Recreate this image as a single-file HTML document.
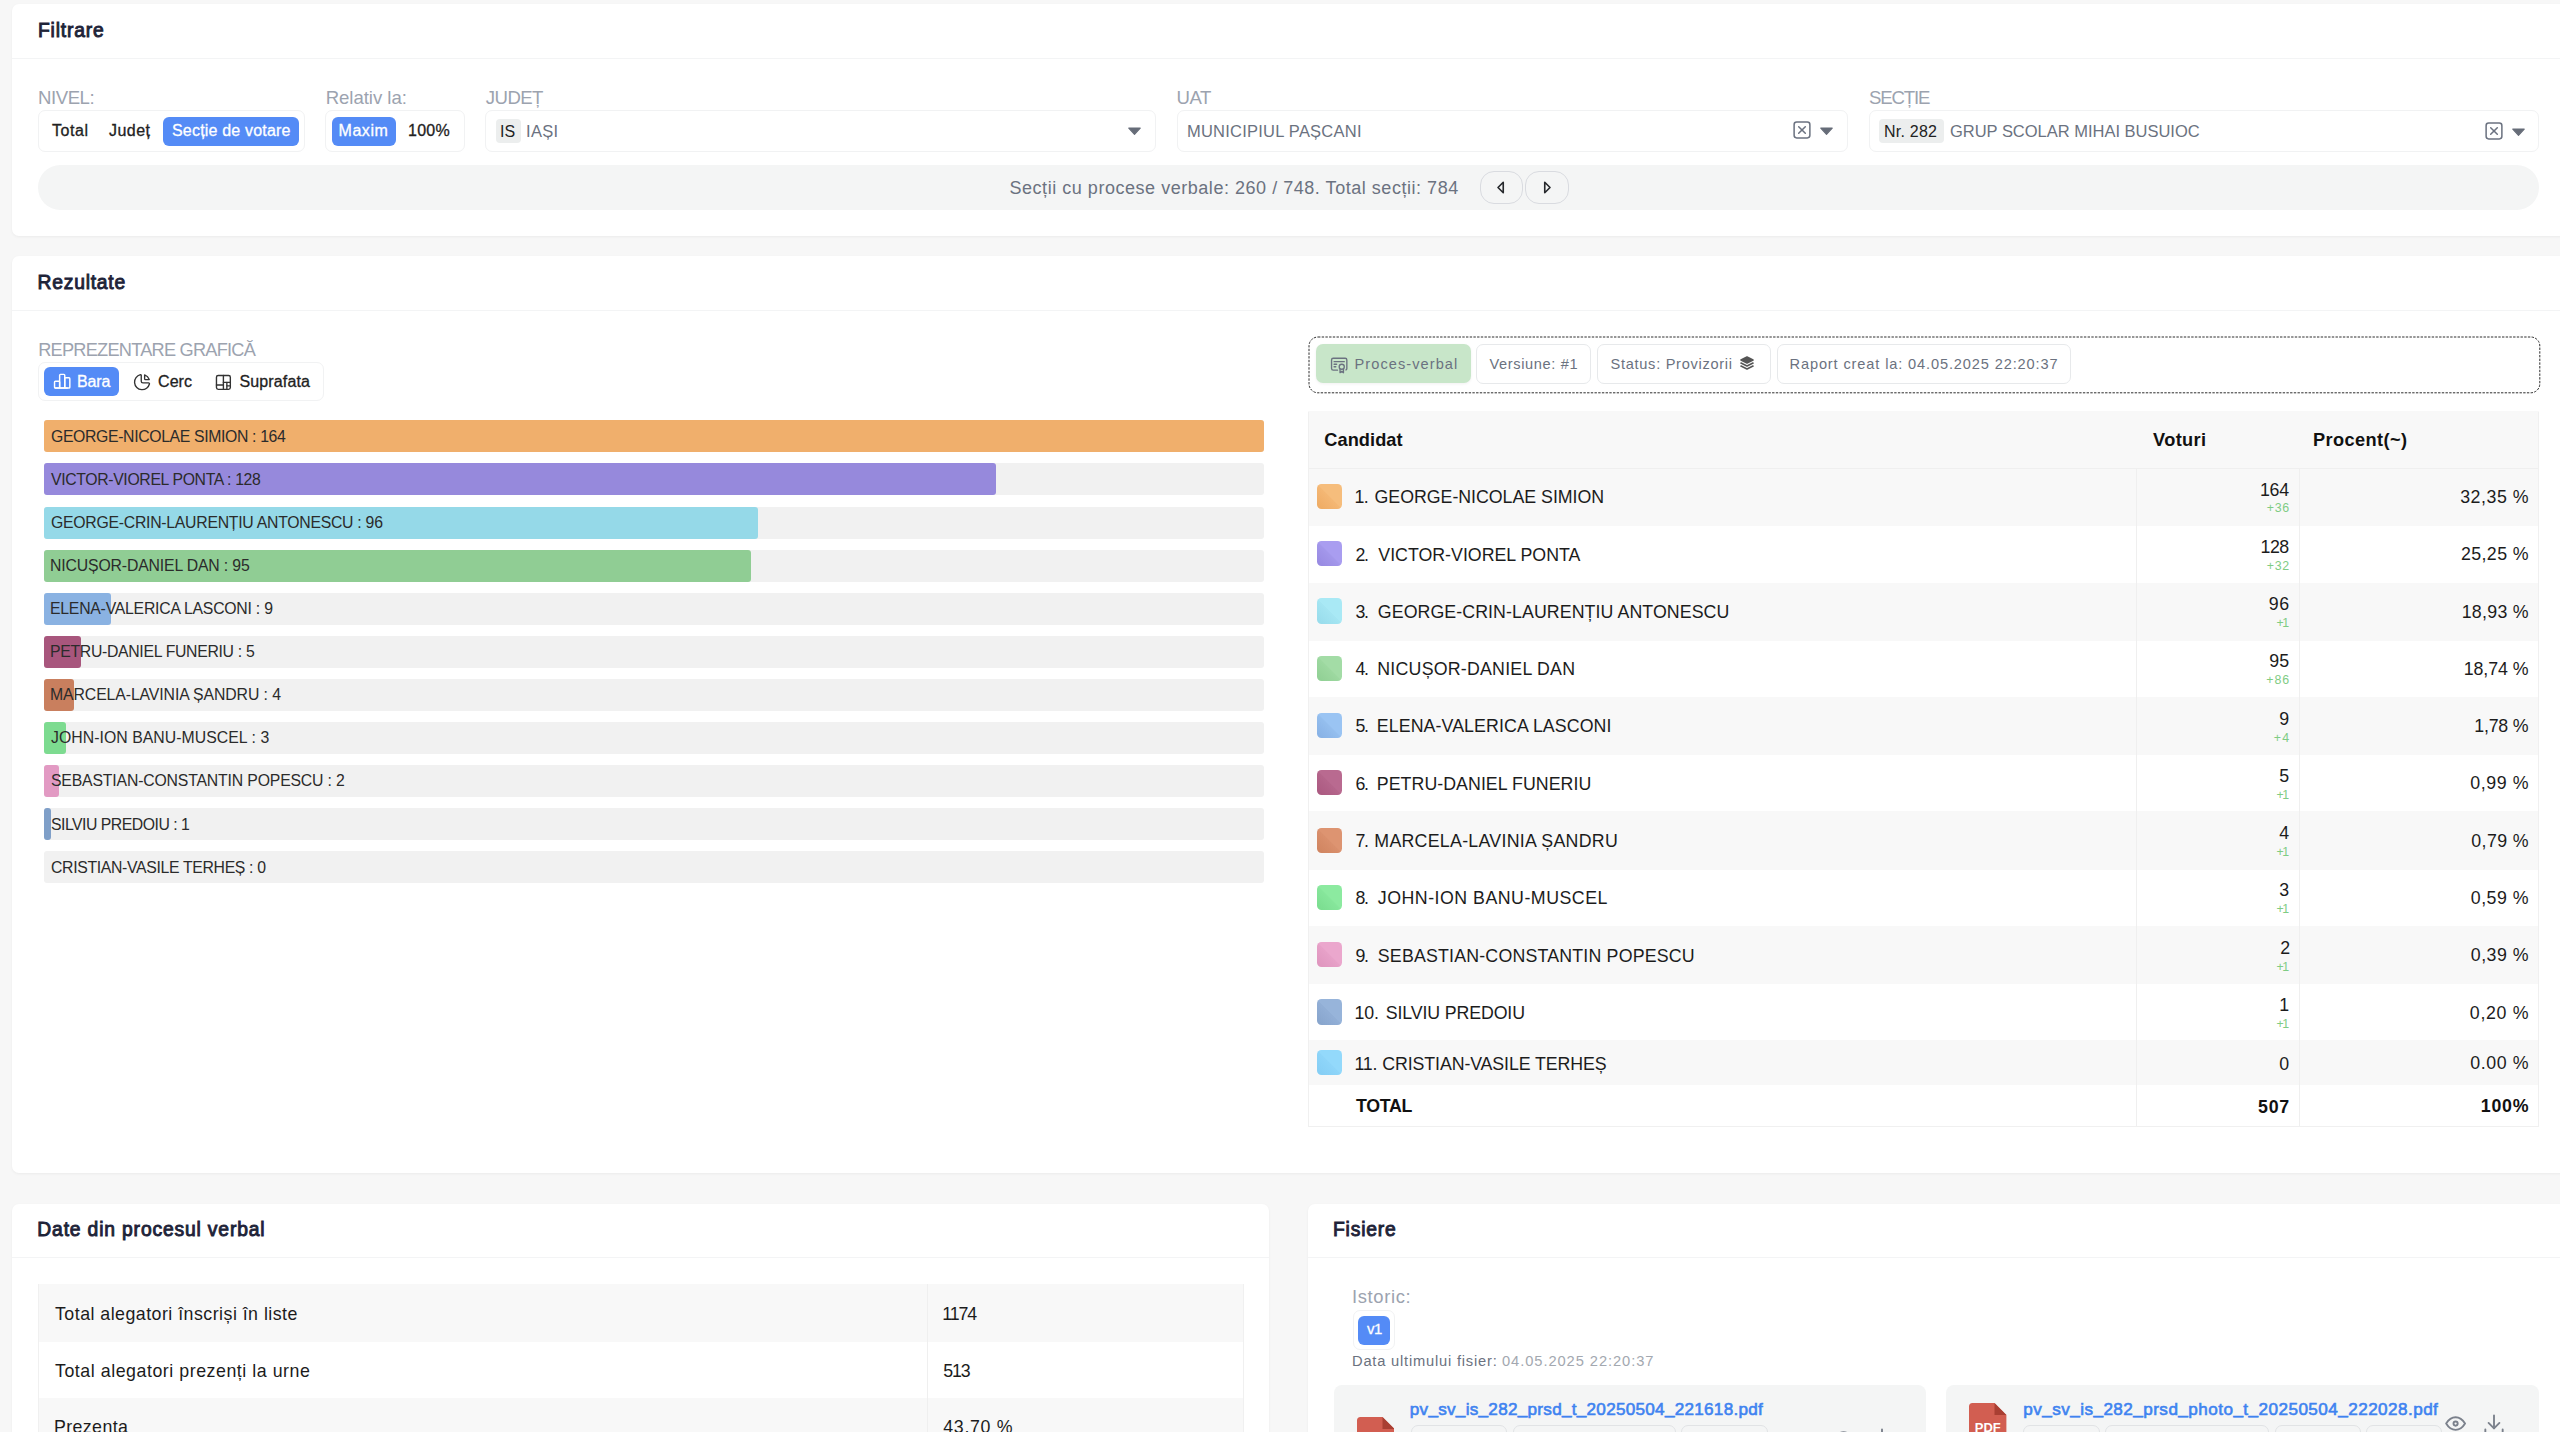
<!DOCTYPE html>
<html lang="ro"><head><meta charset="utf-8"><title>Rezultate</title>
<style>
html,body{margin:0;padding:0;}
body{width:2560px;height:1432px;overflow:hidden;background:#f7f7f7;position:relative;
font-family:"Liberation Sans",sans-serif;}
body>div,body>span,body>svg{position:absolute;box-sizing:border-box;}
.t{white-space:nowrap;line-height:1;}
</style></head>
<body>
<div style="left:12px;top:4px;width:2600px;height:232px;background:#fff;border-radius:7px;box-shadow:0 1px 3px rgba(0,0,0,.05);"></div>
<div style="left:12px;top:58px;width:2600px;height:1px;background:#f3f4f5;"></div>
<div style="left:12px;top:256px;width:2600px;height:917px;background:#fff;border-radius:7px;box-shadow:0 1px 3px rgba(0,0,0,.05);"></div>
<div style="left:12px;top:310px;width:2600px;height:1px;background:#f3f4f5;"></div>
<div style="left:12px;top:1204px;width:1257px;height:300px;background:#fff;border-radius:7px;box-shadow:0 1px 3px rgba(0,0,0,.05);"></div>
<div style="left:12px;top:1257px;width:1257px;height:1px;background:#f3f4f5;"></div>
<div style="left:1308px;top:1204px;width:1300px;height:300px;background:#fff;border-radius:7px;box-shadow:0 1px 3px rgba(0,0,0,.05);"></div>
<div style="left:1308px;top:1257px;width:1300px;height:1px;background:#f3f4f5;"></div>
<span id="t1" class="t" style="top:21.00px;font-size:19.3px;color:#1e2338;-webkit-text-stroke:0.9px currentColor;letter-spacing:0.819px;left:38.00px;">Filtrare</span>
<span id="t2" class="t" style="top:273.00px;font-size:19.3px;color:#1e2338;-webkit-text-stroke:0.9px currentColor;letter-spacing:0.783px;left:37.50px;">Rezultate</span>
<span id="t3" class="t" style="top:1220.00px;font-size:19.3px;color:#1e2338;-webkit-text-stroke:0.9px currentColor;letter-spacing:0.842px;left:37.30px;">Date din procesul verbal</span>
<span id="t4" class="t" style="top:1220.00px;font-size:19.3px;color:#1e2338;-webkit-text-stroke:0.9px currentColor;letter-spacing:0.812px;left:1333.00px;">Fisiere</span>
<span id="t5" class="t" style="top:89.00px;font-size:18.6px;color:#9ca3af;letter-spacing:-0.468px;left:38.10px;">NIVEL:</span>
<span id="t6" class="t" style="top:89.00px;font-size:18.6px;color:#9ca3af;letter-spacing:-0.047px;left:325.70px;">Relativ la:</span>
<span id="t7" class="t" style="top:89.00px;font-size:18.6px;color:#9ca3af;letter-spacing:-0.564px;left:485.80px;">JUDEȚ</span>
<span id="t8" class="t" style="top:89.00px;font-size:18.6px;color:#9ca3af;letter-spacing:-0.475px;left:1176.60px;">UAT</span>
<span id="t9" class="t" style="top:89.00px;font-size:18.6px;color:#9ca3af;letter-spacing:-1.151px;left:1869.00px;">SECȚIE</span>
<div style="left:37.5px;top:110px;width:267.5px;height:41.5px;background:#fff;border:1px solid #f1f2f3;border-radius:7px;"></div>
<span id="t10" class="t" style="top:123.00px;font-size:16px;color:#222;-webkit-text-stroke:.3px currentColor;letter-spacing:0.564px;left:52.00px;">Total</span>
<span id="t11" class="t" style="top:123.00px;font-size:16px;color:#222;-webkit-text-stroke:.3px currentColor;letter-spacing:0.451px;left:109.00px;">Județ</span>
<div style="left:163px;top:117px;width:136px;height:29px;background:#548bf6;border-radius:6px;"></div>
<span id="t12" class="t" style="top:123.00px;font-size:16px;color:#fff;-webkit-text-stroke:.3px currentColor;letter-spacing:0.185px;left:172.00px;">Secție de votare</span>
<div style="left:325px;top:110px;width:139.5px;height:41.5px;background:#fff;border:1px solid #f1f2f3;border-radius:7px;"></div>
<div style="left:332px;top:117px;width:64px;height:29px;background:#548bf6;border-radius:6px;"></div>
<span id="t13" class="t" style="top:123.00px;font-size:16px;color:#fff;-webkit-text-stroke:.3px currentColor;letter-spacing:0.555px;left:338.50px;">Maxim</span>
<span id="t14" class="t" style="top:123.00px;font-size:16px;color:#222;-webkit-text-stroke:.3px currentColor;letter-spacing:0.268px;left:408.00px;">100%</span>
<div style="left:485px;top:110px;width:671px;height:41.5px;background:#fff;border:1px solid #f1f2f3;border-radius:7px;"></div>
<div style="left:496px;top:119px;width:25px;height:23.5px;background:#eceeee;border-radius:4px;"></div>
<span id="t15" class="t" style="top:124.00px;font-size:16px;color:#222;letter-spacing:0.055px;left:500.00px;">IS</span>
<span id="t16" class="t" style="top:123.00px;font-size:16.5px;color:#6b7280;letter-spacing:0.302px;left:526.00px;">IAȘI</span>
<svg style="left:1123px;top:119.3px;" width="23" height="23" viewBox="0 0 24 24" fill="#666c78" stroke="none" stroke-width="2" stroke-linecap="round" stroke-linejoin="round"><path d="M6 9.500l6 6.500l6 -6.500z" stroke="#666c78" stroke-width="1.200"/></svg>
<div style="left:1176.5px;top:110px;width:671px;height:41.5px;background:#fff;border:1px solid #f1f2f3;border-radius:7px;"></div>
<span id="t17" class="t" style="top:123.00px;font-size:16.5px;color:#6b7280;letter-spacing:0.232px;left:1187.00px;">MUNICIPIUL PAȘCANI</span>
<svg style="left:1791px;top:119.2px;" width="22" height="22" viewBox="0 0 24 24" fill="none" stroke="#6b7280" stroke-width="1.65" stroke-linecap="round" stroke-linejoin="round"><rect x="3.400" y="3.400" width="17.200" height="17.200" rx="2.800"/><path d="M8.400 8.400l7.200 7.200"/><path d="M15.600 8.400l-7.200 7.200"/></svg>
<svg style="left:1815.25px;top:119.3px;" width="23" height="23" viewBox="0 0 24 24" fill="#666c78" stroke="none" stroke-width="2" stroke-linecap="round" stroke-linejoin="round"><path d="M6 9.500l6 6.500l6 -6.500z" stroke="#666c78" stroke-width="1.200"/></svg>
<div style="left:1868.5px;top:110px;width:670.5px;height:41.5px;background:#fff;border:1px solid #f1f2f3;border-radius:7px;"></div>
<div style="left:1879px;top:119px;width:64.5px;height:24px;background:#eceeee;border-radius:4px;"></div>
<span id="t18" class="t" style="top:124.00px;font-size:16px;color:#222;letter-spacing:0.219px;left:1884.00px;">Nr. 282</span>
<span id="t19" class="t" style="top:123.00px;font-size:16.5px;color:#6b7280;letter-spacing:-0.015px;left:1950.00px;">GRUP SCOLAR MIHAI BUSUIOC</span>
<svg style="left:2482.5px;top:119.7px;" width="22" height="22" viewBox="0 0 24 24" fill="none" stroke="#6b7280" stroke-width="1.65" stroke-linecap="round" stroke-linejoin="round"><rect x="3.400" y="3.400" width="17.200" height="17.200" rx="2.800"/><path d="M8.400 8.400l7.200 7.200"/><path d="M15.600 8.400l-7.200 7.200"/></svg>
<svg style="left:2506.5px;top:119.8px;" width="23" height="23" viewBox="0 0 24 24" fill="#666c78" stroke="none" stroke-width="2" stroke-linecap="round" stroke-linejoin="round"><path d="M6 9.500l6 6.500l6 -6.500z" stroke="#666c78" stroke-width="1.200"/></svg>
<div style="left:37.5px;top:165px;width:2501.5px;height:44.5px;background:#f4f5f5;border-radius:22.25px;"></div>
<span id="t20" class="t" style="top:179.00px;font-size:18px;color:#6b7280;letter-spacing:0.533px;left:1009.50px;">Secții cu procese verbale: 260 / 748. Total secții: 784</span>
<div style="left:1480px;top:171px;width:42.7px;height:32.5px;border:1px solid #d9dbe0;border-radius:14px;"></div>
<div style="left:1525px;top:171px;width:43.8px;height:32.5px;border:1px solid #d9dbe0;border-radius:14px;"></div>
<svg style="left:1491.2px;top:177px;" width="21" height="21" viewBox="0 0 24 24" fill="none" stroke="#26282c" stroke-width="1.85" stroke-linecap="round" stroke-linejoin="round"><path d="M14 6l-6 6l6 6v-12"/></svg>
<svg style="left:1535.9px;top:177px;" width="21" height="21" viewBox="0 0 24 24" fill="none" stroke="#26282c" stroke-width="1.85" stroke-linecap="round" stroke-linejoin="round"><path d="M10 18l6 -6l-6 -6v12"/></svg>
<span id="t21" class="t" style="top:341.00px;font-size:18.2px;color:#9ca3af;letter-spacing:-0.761px;left:38.20px;">REPREZENTARE GRAFICĂ</span>
<div style="left:38px;top:362.3px;width:286px;height:39px;background:#fff;border:1px solid #f1f2f3;border-radius:7px;"></div>
<div style="left:44px;top:367.4px;width:74.5px;height:29px;background:#548bf6;border-radius:6px;"></div>
<svg style="left:51.8px;top:371.4px;" width="20.4" height="20.4" viewBox="0 0 24 24" fill="none" stroke="#fff" stroke-width="1.7" stroke-linecap="round" stroke-linejoin="round"><path d="M3 13a1 1 0 0 1 1 -1h4a1 1 0 0 1 1 1v6a1 1 0 0 1 -1 1h-4a1 1 0 0 1 -1 -1z"/><path d="M15 9a1 1 0 0 1 1 -1h4a1 1 0 0 1 1 1v10a1 1 0 0 1 -1 1h-4a1 1 0 0 1 -1 -1z"/><path d="M9 5a1 1 0 0 1 1 -1h4a1 1 0 0 1 1 1v14a1 1 0 0 1 -1 1h-4a1 1 0 0 1 -1 -1z"/><path d="M4 20h14"/></svg>
<span id="t22" class="t" style="top:374.00px;font-size:16px;color:#fff;-webkit-text-stroke:.3px currentColor;letter-spacing:-0.133px;left:77.00px;">Bara</span>
<svg style="left:132px;top:371.7px;" width="20.2" height="20.2" viewBox="0 0 24 24" fill="none" stroke="#333" stroke-width="1.6" stroke-linecap="round" stroke-linejoin="round"><path d="M10 3.2a9 9 0 1 0 10.8 10.8a1 1 0 0 0 -1 -1h-6.8a2 2 0 0 1 -2 -2v-7a.9 .9 0 0 0 -1 -.8"/><path d="M15 3.5a9 9 0 0 1 5.500 5.500h-4.500a1 1 0 0 1 -1 -1v-4.500"/></svg>
<span id="t23" class="t" style="top:374.00px;font-size:16px;color:#222;-webkit-text-stroke:.3px currentColor;letter-spacing:0.073px;left:158.00px;">Cerc</span>
<svg style="left:213.1px;top:371.6px;" width="20.8" height="20.8" viewBox="0 0 24 24" fill="none" stroke="#333" stroke-width="1.6" stroke-linecap="round" stroke-linejoin="round"><path d="M4 6a2 2 0 0 1 2 -2h12a2 2 0 0 1 2 2v12a2 2 0 0 1 -2 2h-12a2 2 0 0 1 -2 -2z"/><path d="M12 4v16"/><path d="M4 15h8"/><path d="M12 12h8"/><path d="M16 12v8"/><path d="M16 16h4"/></svg>
<span id="t24" class="t" style="top:374.00px;font-size:16px;color:#222;-webkit-text-stroke:.3px currentColor;letter-spacing:0.127px;left:239.50px;">Suprafata</span>
<div style="left:44px;top:420.3px;width:1220px;height:32px;background:#f1f1f1;border-radius:3px;"></div>
<div style="left:44px;top:420.3px;width:1220.0px;height:32px;background:#f0af6c;border-radius:3px;"></div>
<span id="t25" class="t" style="top:429.00px;font-size:15.8px;color:#2b2b2b;letter-spacing:-0.356px;left:51.00px;">GEORGE-NICOLAE SIMION : 164</span>
<div style="left:44px;top:463.4px;width:1220px;height:32px;background:#f1f1f1;border-radius:3px;"></div>
<div style="left:44px;top:463.4px;width:952.2px;height:32px;background:#9689dc;border-radius:3px;"></div>
<span id="t26" class="t" style="top:472.00px;font-size:15.8px;color:#2b2b2b;letter-spacing:-0.353px;left:51.00px;">VICTOR-VIOREL PONTA : 128</span>
<div style="left:44px;top:506.5px;width:1220px;height:32px;background:#f1f1f1;border-radius:3px;"></div>
<div style="left:44px;top:506.5px;width:714.1px;height:32px;background:#95d9e8;border-radius:3px;"></div>
<span id="t27" class="t" style="top:515.00px;font-size:15.8px;color:#2b2b2b;letter-spacing:-0.264px;left:51.00px;">GEORGE-CRIN-LAURENȚIU ANTONESCU : 96</span>
<div style="left:44px;top:549.6px;width:1220px;height:32px;background:#f1f1f1;border-radius:3px;"></div>
<div style="left:44px;top:549.6px;width:706.7px;height:32px;background:#90cd94;border-radius:3px;"></div>
<span id="t28" class="t" style="top:558.00px;font-size:15.8px;color:#2b2b2b;letter-spacing:-0.153px;left:50.00px;">NICUȘOR-DANIEL DAN : 95</span>
<div style="left:44px;top:592.7px;width:1220px;height:32px;background:#f1f1f1;border-radius:3px;"></div>
<div style="left:44px;top:592.7px;width:67.0px;height:32px;background:#8ab2e2;border-radius:3px;"></div>
<span id="t29" class="t" style="top:601.00px;font-size:15.8px;color:#2b2b2b;letter-spacing:-0.237px;left:50.00px;">ELENA-VALERICA LASCONI : 9</span>
<div style="left:44px;top:635.8px;width:1220px;height:32px;background:#f1f1f1;border-radius:3px;"></div>
<div style="left:44px;top:635.8px;width:37.2px;height:32px;background:#a8567d;border-radius:3px;"></div>
<span id="t30" class="t" style="top:644.00px;font-size:15.8px;color:#2b2b2b;letter-spacing:-0.310px;left:50.00px;">PETRU-DANIEL FUNERIU : 5</span>
<div style="left:44px;top:678.9px;width:1220px;height:32px;background:#f1f1f1;border-radius:3px;"></div>
<div style="left:44px;top:678.9px;width:29.8px;height:32px;background:#c97f5e;border-radius:3px;"></div>
<span id="t31" class="t" style="top:687.00px;font-size:15.8px;color:#2b2b2b;letter-spacing:-0.092px;left:50.00px;">MARCELA-LAVINIA ȘANDRU : 4</span>
<div style="left:44px;top:722.0px;width:1220px;height:32px;background:#f1f1f1;border-radius:3px;"></div>
<div style="left:44px;top:722.0px;width:22.3px;height:32px;background:#7ddb90;border-radius:3px;"></div>
<span id="t32" class="t" style="top:730.00px;font-size:15.8px;color:#2b2b2b;letter-spacing:0.049px;left:51.00px;">JOHN-ION BANU-MUSCEL : 3</span>
<div style="left:44px;top:765.1px;width:1220px;height:32px;background:#f1f1f1;border-radius:3px;"></div>
<div style="left:44px;top:765.1px;width:14.9px;height:32px;background:#e29ac3;border-radius:3px;"></div>
<span id="t33" class="t" style="top:773.00px;font-size:15.8px;color:#2b2b2b;letter-spacing:-0.169px;left:51.00px;">SEBASTIAN-CONSTANTIN POPESCU : 2</span>
<div style="left:44px;top:808.2px;width:1220px;height:32px;background:#f1f1f1;border-radius:3px;"></div>
<div style="left:44px;top:808.2px;width:7.4px;height:32px;background:#7f9fc8;border-radius:3px;"></div>
<span id="t34" class="t" style="top:817.00px;font-size:15.8px;color:#2b2b2b;letter-spacing:-0.494px;left:51.00px;">SILVIU PREDOIU : 1</span>
<div style="left:44px;top:851.3px;width:1220px;height:32px;background:#f1f1f1;border-radius:3px;"></div>
<span id="t35" class="t" style="top:860.00px;font-size:15.8px;color:#2b2b2b;letter-spacing:-0.330px;left:51.00px;">CRISTIAN-VASILE TERHEȘ : 0</span>
<svg style="left:1307.5px;top:335.7px;" width="1233" height="58" viewBox="0 0 1233 58" fill="none"><rect x="1" y="1" width="1230.800" height="55.800" rx="9" stroke="#2e2e2e" stroke-width="1" stroke-dasharray="2.400 1.300"/></svg>
<div style="left:1316.2px;top:344.2px;width:154.5px;height:39.2px;background:#c8e6c9;border-radius:7px;box-shadow:0 1px 3px rgba(0,0,0,.06);"></div>
<svg style="left:1329.1px;top:353.5px;" width="20.4" height="20.4" viewBox="0 0 24 24" fill="none" stroke="#6b7280" stroke-width="1.6" stroke-linecap="round" stroke-linejoin="round"><path d="M12 15a3 3 0 1 0 6 0a3 3 0 1 0 -6 0"/><path d="M13 17.5v4.5l2 -1.5l2 1.5v-4.5"/><path d="M10 19h-5a2 2 0 0 1 -2 -2v-10c0 -1.100 .9 -2 2 -2h14a2 2 0 0 1 2 2v10a2 2 0 0 1 -1 1.730"/><path d="M6 9h12"/><path d="M6 12h3"/><path d="M6 15h2"/></svg>
<span id="t36" class="t" style="top:357.00px;font-size:14.6px;color:#6b7280;letter-spacing:1.060px;left:1354.50px;">Proces-verbal</span>
<div style="left:1475.7px;top:344px;width:115px;height:39.5px;background:#fff;border:1px solid #e7e9eb;border-radius:7px;"></div>
<span id="t37" class="t" style="top:357.00px;font-size:14.6px;color:#6b7280;letter-spacing:0.635px;left:1489.50px;">Versiune: #1</span>
<div style="left:1596.5px;top:344px;width:174.3px;height:39.5px;background:#fff;border:1px solid #e7e9eb;border-radius:7px;"></div>
<span id="t38" class="t" style="top:357.00px;font-size:14.6px;color:#6b7280;letter-spacing:0.709px;left:1610.50px;">Status: Provizorii</span>
<svg style="left:1738px;top:353.8px;" width="18" height="18" viewBox="0 0 24 24" fill="none" stroke="#555" stroke-width="2.2" stroke-linecap="round" stroke-linejoin="round"><path d="M12 4l-8 4l8 4l8 -4z" fill="#555" stroke="#555"/><path d="M4 12l8 4l8 -4"/><path d="M4 16l8 4l8 -4"/></svg>
<div style="left:1776.7px;top:344px;width:294.7px;height:39.5px;background:#fff;border:1px solid #e7e9eb;border-radius:7px;"></div>
<span id="t39" class="t" style="top:357.00px;font-size:14.6px;color:#6b7280;letter-spacing:0.868px;left:1789.50px;">Raport creat la: 04.05.2025 22:20:37</span>
<div style="left:1308px;top:411.3px;width:1231.3000000000002px;height:56.9px;background:#f8f8f8;"></div>
<span id="t40" class="t" style="top:431.00px;font-size:18.2px;color:#111;font-weight:700;letter-spacing:0.065px;left:1324.30px;">Candidat</span>
<span id="t41" class="t" style="top:431.00px;font-size:18.2px;color:#111;font-weight:700;letter-spacing:0.373px;left:2153.00px;">Voturi</span>
<span id="t42" class="t" style="top:431.00px;font-size:18.2px;color:#111;font-weight:700;letter-spacing:0.401px;left:2313.00px;">Procent(~)</span>
<div style="left:1308px;top:468.2px;width:1231.3000000000002px;height:58.0px;background:#f8f8f8;"></div>
<div style="left:1317px;top:483.9px;width:25.2px;height:25.2px;border-radius:4.5px;background:linear-gradient(225deg,#f6bd7c 0%,#f6bd7c 49%,#f4b774 51%,#eeaa62 100%);"></div>
<span id="t43" class="t" style="top:489.00px;font-size:17.8px;color:#1c1c1c;letter-spacing:-0.589px;left:1354.50px;">1.</span>
<span id="t44" class="t" style="top:489.00px;font-size:17.8px;color:#1c1c1c;letter-spacing:-0.028px;left:1374.50px;">GEORGE-NICOLAE SIMION</span>
<span id="t45" class="t" style="top:482.00px;font-size:17.8px;color:#1c1c1c;letter-spacing:-0.189px;right:271.00px;">164</span>
<span id="t46" class="t" style="top:502.00px;font-size:12.4px;color:#7fcc84;letter-spacing:0.736px;right:270.07px;">+36</span>
<span id="t47" class="t" style="top:489.00px;font-size:17.8px;color:#1c1c1c;letter-spacing:0.527px;right:30.86px;">32,35 %</span>
<div style="left:1317px;top:541.18px;width:25.2px;height:25.2px;border-radius:4.5px;background:linear-gradient(225deg,#a99df0 0%,#a99df0 49%,#a397eb 51%,#9688e0 100%);"></div>
<span id="t48" class="t" style="top:547.00px;font-size:17.8px;color:#1c1c1c;letter-spacing:-1.500px;left:1355.50px;">2.</span>
<span id="t49" class="t" style="top:547.00px;font-size:17.8px;color:#1c1c1c;letter-spacing:-0.006px;left:1378.30px;">VICTOR-VIOREL PONTA</span>
<span id="t50" class="t" style="top:539.00px;font-size:17.8px;color:#1c1c1c;letter-spacing:-0.539px;right:271.35px;">128</span>
<span id="t51" class="t" style="top:560.00px;font-size:12.4px;color:#7fcc84;letter-spacing:0.736px;right:270.07px;">+32</span>
<span id="t52" class="t" style="top:546.00px;font-size:17.8px;color:#1c1c1c;letter-spacing:0.411px;right:30.98px;">25,25 %</span>
<div style="left:1308px;top:582.8px;width:1231.3000000000002px;height:58.0px;background:#f8f8f8;"></div>
<div style="left:1317px;top:598.46px;width:25.2px;height:25.2px;border-radius:4.5px;background:linear-gradient(225deg,#a9e9f5 0%,#a9e9f5 49%,#a4e5f2 51%,#97dbeb 100%);"></div>
<span id="t53" class="t" style="top:604.00px;font-size:17.8px;color:#1c1c1c;letter-spacing:-1.500px;left:1355.50px;">3.</span>
<span id="t54" class="t" style="top:604.00px;font-size:17.8px;color:#1c1c1c;letter-spacing:0.072px;left:1377.80px;">GEORGE-CRIN-LAURENȚIU ANTONESCU</span>
<span id="t55" class="t" style="top:596.00px;font-size:17.8px;color:#1c1c1c;letter-spacing:0.711px;right:270.10px;">96</span>
<span id="t56" class="t" style="top:617.00px;font-size:12.4px;color:#7fcc84;letter-spacing:-1.500px;right:272.31px;">+1</span>
<span id="t57" class="t" style="top:604.00px;font-size:17.8px;color:#1c1c1c;letter-spacing:0.277px;right:31.11px;">18,93 %</span>
<div style="left:1317px;top:655.74px;width:25.2px;height:25.2px;border-radius:4.5px;background:linear-gradient(225deg,#a3dca6 0%,#a3dca6 49%,#9dd8a0 51%,#8fcf93 100%);"></div>
<span id="t58" class="t" style="top:661.00px;font-size:17.8px;color:#1c1c1c;letter-spacing:-1.500px;left:1355.50px;">4.</span>
<span id="t59" class="t" style="top:661.00px;font-size:17.8px;color:#1c1c1c;letter-spacing:0.218px;left:1377.30px;">NICUȘOR-DANIEL DAN</span>
<span id="t60" class="t" style="top:653.00px;font-size:17.8px;color:#1c1c1c;letter-spacing:0.211px;right:270.60px;">95</span>
<span id="t61" class="t" style="top:674.00px;font-size:12.4px;color:#7fcc84;letter-spacing:0.986px;right:269.82px;">+86</span>
<span id="t62" class="t" style="top:661.00px;font-size:17.8px;color:#1c1c1c;letter-spacing:-0.056px;right:31.45px;">18,74 %</span>
<div style="left:1308px;top:696.7px;width:1231.3000000000002px;height:58.5px;background:#f8f8f8;"></div>
<div style="left:1317px;top:713.02px;width:25.2px;height:25.2px;border-radius:4.5px;background:linear-gradient(225deg,#9ac4f3 0%,#9ac4f3 49%,#94beee 51%,#86b0e4 100%);"></div>
<span id="t63" class="t" style="top:718.00px;font-size:17.8px;color:#1c1c1c;letter-spacing:-1.500px;left:1355.50px;">5.</span>
<span id="t64" class="t" style="top:718.00px;font-size:17.8px;color:#1c1c1c;letter-spacing:0.085px;left:1376.80px;">ELENA-VALERICA LASCONI</span>
<span id="t65" class="t" style="top:711.00px;font-size:17.8px;color:#1c1c1c;right:270.81px;">9</span>
<span id="t66" class="t" style="top:732.00px;font-size:12.4px;color:#7fcc84;letter-spacing:1.364px;right:269.44px;">+4</span>
<span id="t67" class="t" style="top:718.00px;font-size:17.8px;color:#1c1c1c;letter-spacing:-0.190px;right:31.58px;">1,78 %</span>
<div style="left:1317px;top:770.3px;width:25.2px;height:25.2px;border-radius:4.5px;background:linear-gradient(225deg,#b96a90 0%,#b96a90 49%,#b4658b 51%,#aa587f 100%);"></div>
<span id="t68" class="t" style="top:776.00px;font-size:17.8px;color:#1c1c1c;letter-spacing:-1.500px;left:1355.50px;">6.</span>
<span id="t69" class="t" style="top:776.00px;font-size:17.8px;color:#1c1c1c;letter-spacing:0.040px;left:1376.80px;">PETRU-DANIEL FUNERIU</span>
<span id="t70" class="t" style="top:768.00px;font-size:17.8px;color:#1c1c1c;right:270.81px;">5</span>
<span id="t71" class="t" style="top:789.00px;font-size:12.4px;color:#7fcc84;letter-spacing:-1.500px;right:272.31px;">+1</span>
<span id="t72" class="t" style="top:775.00px;font-size:17.8px;color:#1c1c1c;letter-spacing:0.590px;right:30.80px;">0,99 %</span>
<div style="left:1308px;top:811px;width:1231.3000000000002px;height:58.7px;background:#f8f8f8;"></div>
<div style="left:1317px;top:827.58px;width:25.2px;height:25.2px;border-radius:4.5px;background:linear-gradient(225deg,#dd9471 0%,#dd9471 49%,#d98f6c 51%,#cf835f 100%);"></div>
<span id="t73" class="t" style="top:833.00px;font-size:17.8px;color:#1c1c1c;letter-spacing:-1.500px;left:1355.50px;">7.</span>
<span id="t74" class="t" style="top:833.00px;font-size:17.8px;color:#1c1c1c;letter-spacing:0.270px;left:1374.30px;">MARCELA-LAVINIA ȘANDRU</span>
<span id="t75" class="t" style="top:825.00px;font-size:17.8px;color:#1c1c1c;right:270.81px;">4</span>
<span id="t76" class="t" style="top:846.00px;font-size:12.4px;color:#7fcc84;letter-spacing:-1.500px;right:272.31px;">+1</span>
<span id="t77" class="t" style="top:833.00px;font-size:17.8px;color:#1c1c1c;letter-spacing:0.390px;right:31.00px;">0,79 %</span>
<div style="left:1317px;top:884.86px;width:25.2px;height:25.2px;border-radius:4.5px;background:linear-gradient(225deg,#8ceaa0 0%,#8ceaa0 49%,#86e69b 51%,#79dc8e 100%);"></div>
<span id="t78" class="t" style="top:890.00px;font-size:17.8px;color:#1c1c1c;letter-spacing:-1.500px;left:1355.50px;">8.</span>
<span id="t79" class="t" style="top:890.00px;font-size:17.8px;color:#1c1c1c;letter-spacing:0.489px;left:1377.80px;">JOHN-ION BANU-MUSCEL</span>
<span id="t80" class="t" style="top:882.00px;font-size:17.8px;color:#1c1c1c;right:270.81px;">3</span>
<span id="t81" class="t" style="top:903.00px;font-size:12.4px;color:#7fcc84;letter-spacing:-1.500px;right:272.31px;">+1</span>
<span id="t82" class="t" style="top:890.00px;font-size:17.8px;color:#1c1c1c;letter-spacing:0.490px;right:30.90px;">0,59 %</span>
<div style="left:1308px;top:925.8px;width:1231.3000000000002px;height:58.3px;background:#f8f8f8;"></div>
<div style="left:1317px;top:942.14px;width:25.2px;height:25.2px;border-radius:4.5px;background:linear-gradient(225deg,#eba7cd 0%,#eba7cd 49%,#e7a1c8 51%,#de94bd 100%);"></div>
<span id="t83" class="t" style="top:948.00px;font-size:17.8px;color:#1c1c1c;letter-spacing:-1.500px;left:1355.50px;">9.</span>
<span id="t84" class="t" style="top:948.00px;font-size:17.8px;color:#1c1c1c;letter-spacing:0.184px;left:1377.80px;">SEBASTIAN-CONSTANTIN POPESCU</span>
<span id="t85" class="t" style="top:940.00px;font-size:17.8px;color:#1c1c1c;right:269.81px;">2</span>
<span id="t86" class="t" style="top:961.00px;font-size:12.4px;color:#7fcc84;letter-spacing:-1.500px;right:272.31px;">+1</span>
<span id="t87" class="t" style="top:947.00px;font-size:17.8px;color:#1c1c1c;letter-spacing:0.490px;right:30.90px;">0,39 %</span>
<div style="left:1317px;top:999.42px;width:25.2px;height:25.2px;border-radius:4.5px;background:linear-gradient(225deg,#97b4da 0%,#97b4da 49%,#92afd6 51%,#86a3cb 100%);"></div>
<span id="t88" class="t" style="top:1005.00px;font-size:17.8px;color:#1c1c1c;letter-spacing:-0.139px;left:1354.50px;">10.</span>
<span id="t89" class="t" style="top:1005.00px;font-size:17.8px;color:#1c1c1c;letter-spacing:-0.125px;left:1385.70px;">SILVIU PREDOIU</span>
<span id="t90" class="t" style="top:997.00px;font-size:17.8px;color:#1c1c1c;right:270.81px;">1</span>
<span id="t91" class="t" style="top:1018.00px;font-size:12.4px;color:#7fcc84;letter-spacing:-1.500px;right:272.31px;">+1</span>
<span id="t92" class="t" style="top:1005.00px;font-size:17.8px;color:#1c1c1c;letter-spacing:0.690px;right:30.70px;">0,20 %</span>
<div style="left:1308px;top:1040.2px;width:1231.3000000000002px;height:44.5px;background:#f8f8f8;"></div>
<div style="left:1317px;top:1049.5px;width:25.2px;height:25.2px;border-radius:4.5px;background:linear-gradient(225deg,#93d9fb 0%,#93d9fb 49%,#8ed5f9 51%,#84cdf4 100%);"></div>
<span id="t93" class="t" style="top:1056.00px;font-size:17.8px;color:#1c1c1c;letter-spacing:-0.229px;left:1354.50px;">11.</span>
<span id="t94" class="t" style="top:1056.00px;font-size:17.8px;color:#1c1c1c;letter-spacing:-0.112px;left:1382.30px;">CRISTIAN-VASILE TERHEȘ</span>
<span id="t95" class="t" style="top:1056.00px;font-size:17.8px;color:#1c1c1c;right:270.81px;">0</span>
<span id="t96" class="t" style="top:1055.00px;font-size:17.8px;color:#1c1c1c;letter-spacing:0.590px;right:30.80px;">0.00 %</span>
<span id="t97" class="t" style="top:1098.00px;font-size:17.8px;color:#111;font-weight:700;letter-spacing:-0.313px;left:1356.00px;">TOTAL</span>
<span id="t98" class="t" style="top:1099.00px;font-size:17.8px;color:#111;font-weight:700;letter-spacing:0.761px;right:270.05px;">507</span>
<span id="t99" class="t" style="top:1098.00px;font-size:17.8px;color:#111;font-weight:700;letter-spacing:0.811px;right:30.58px;">100%</span>
<div style="left:1308px;top:467.7px;width:1231.3000000000002px;height:1px;background:#efefef;"></div>
<div style="left:1308px;top:411.5px;width:1px;height:714.9000000000001px;background:#f0f0f0;"></div>
<div style="left:2538.3px;top:411.5px;width:1px;height:714.9000000000001px;background:#f0f0f0;"></div>
<div style="left:2136.3px;top:468px;width:1px;height:658.4000000000001px;background:#efefef;"></div>
<div style="left:2298.5px;top:468px;width:1px;height:658.4000000000001px;background:#efefef;"></div>
<div style="left:1308px;top:1126px;width:1231.3000000000002px;height:1px;background:#f0f0f0;"></div>
<div style="left:37.5px;top:1283.75px;width:1206.2px;height:58.25px;background:#f8f8f8;"></div>
<div style="left:37.5px;top:1398px;width:1206.2px;height:60px;background:#f8f8f8;"></div>
<div style="left:37.5px;top:1283.75px;width:1px;height:200px;background:#f0f0f0;"></div>
<div style="left:1242.7px;top:1283.75px;width:1px;height:200px;background:#f0f0f0;"></div>
<div style="left:927.2px;top:1283.75px;width:1px;height:200px;background:#efefef;"></div>
<span id="t100" class="t" style="top:1306.00px;font-size:17.8px;color:#1c1c1c;letter-spacing:0.472px;left:55.00px;">Total alegatori înscriși în liste</span>
<span id="t101" class="t" style="top:1306.00px;font-size:17.8px;color:#1c1c1c;letter-spacing:-1.116px;left:942.30px;">1174</span>
<span id="t102" class="t" style="top:1363.00px;font-size:17.8px;color:#1c1c1c;letter-spacing:0.538px;left:55.00px;">Total alegatori prezenți la urne</span>
<span id="t103" class="t" style="top:1363.00px;font-size:17.8px;color:#1c1c1c;letter-spacing:-1.139px;left:943.30px;">513</span>
<span id="t104" class="t" style="top:1419.00px;font-size:17.8px;color:#1c1c1c;letter-spacing:0.389px;left:54.00px;">Prezența</span>
<span id="t105" class="t" style="top:1419.00px;font-size:17.8px;color:#1c1c1c;letter-spacing:0.677px;left:943.30px;">43,70 %</span>
<span id="t106" class="t" style="top:1288.00px;font-size:18.4px;color:#9ca3af;letter-spacing:0.636px;left:1352.00px;">Istoric:</span>
<div style="left:1353px;top:1309.5px;width:42px;height:40px;background:#fff;border:1px solid #f1f2f3;border-radius:7px;"></div>
<div style="left:1358.3px;top:1316px;width:31.5px;height:28.5px;background:#548bf6;border-radius:6px;"></div>
<span id="t107" class="t" style="top:1321.00px;font-size:15px;color:#fff;-webkit-text-stroke:.3px currentColor;letter-spacing:-0.500px;left:1367.00px;">v1</span>
<span id="t108" class="t" style="top:1354.00px;font-size:14.7px;color:#6b7280;letter-spacing:0.792px;left:1352.00px;">Data ultimului fisier:</span>
<span id="t109" class="t" style="top:1354.00px;font-size:14.7px;color:#a3a8b0;letter-spacing:0.928px;left:1502.00px;">04.05.2025 22:20:37</span>
<div style="left:1333.75px;top:1384.5px;width:592.5px;height:100px;background:#f4f5f5;border-radius:8px;"></div>
<div style="left:1946.25px;top:1384.5px;width:592.75px;height:100px;background:#f4f5f5;border-radius:8px;"></div>
<span id="t110" class="t" style="top:1401.00px;font-size:17.1px;color:#3f83f0;-webkit-text-stroke:0.62px currentColor;letter-spacing:0.284px;left:1409.75px;">pv<span style="position:relative;top:-1.5px">_</span>sv<span style="position:relative;top:-1.5px">_</span>is<span style="position:relative;top:-1.5px">_</span>282<span style="position:relative;top:-1.5px">_</span>prsd<span style="position:relative;top:-1.5px">_</span>t<span style="position:relative;top:-1.5px">_</span>20250504<span style="position:relative;top:-1.5px">_</span>221618.pdf</span>
<span id="t111" class="t" style="top:1401.00px;font-size:17.1px;color:#3f83f0;-webkit-text-stroke:0.62px currentColor;letter-spacing:0.455px;left:2023.25px;">pv<span style="position:relative;top:-1.5px">_</span>sv<span style="position:relative;top:-1.5px">_</span>is<span style="position:relative;top:-1.5px">_</span>282<span style="position:relative;top:-1.5px">_</span>prsd<span style="position:relative;top:-1.5px">_</span>photo<span style="position:relative;top:-1.5px">_</span>t<span style="position:relative;top:-1.5px">_</span>20250504<span style="position:relative;top:-1.5px">_</span>222028.pdf</span>
<svg style="left:1356.6px;top:1417.2px;" width="37.4" height="50" viewBox="0 0 37.400 50"><path d="M3.500 0h22l11.900 11.900v38.100h-37.400v-46.500a3.500 3.500 0 0 1 3.500 -3.500z" fill="#d25e51"/><path d="M25.500 0l11.900 11.900h-11.900z" fill="#a93f33"/><text x="5.800" y="28.600" font-family="Liberation Sans, sans-serif" font-weight="700" font-size="13.600" fill="#fff" textLength="26" lengthAdjust="spacingAndGlyphs">PDF</text></svg>
<svg style="left:1969.4px;top:1402.7px;" width="37.4" height="50" viewBox="0 0 37.400 50"><path d="M3.500 0h22l11.900 11.900v38.100h-37.400v-46.500a3.500 3.500 0 0 1 3.500 -3.500z" fill="#d25e51"/><path d="M25.500 0l11.900 11.900h-11.900z" fill="#a93f33"/><text x="5.800" y="28.600" font-family="Liberation Sans, sans-serif" font-weight="700" font-size="13.600" fill="#fff" textLength="26" lengthAdjust="spacingAndGlyphs">PDF</text></svg>
<div style="left:1410.75px;top:1425.3px;width:96.25px;height:30px;background:#f4f5f5;border:1px solid #e1e3e5;border-radius:7px;"></div>
<div style="left:1512.5px;top:1425.3px;width:163.25px;height:30px;background:#f4f5f5;border:1px solid #e1e3e5;border-radius:7px;"></div>
<div style="left:1681.25px;top:1425.3px;width:86.25px;height:30px;background:#f4f5f5;border:1px solid #e1e3e5;border-radius:7px;"></div>
<div style="left:2023.25px;top:1425.3px;width:76.75px;height:30px;background:#f4f5f5;border:1px solid #e1e3e5;border-radius:7px;"></div>
<div style="left:2105px;top:1425.3px;width:163.75px;height:30px;background:#f4f5f5;border:1px solid #e1e3e5;border-radius:7px;"></div>
<div style="left:2275px;top:1425.3px;width:85.5px;height:30px;background:#f4f5f5;border:1px solid #e1e3e5;border-radius:7px;"></div>
<div style="left:2366.25px;top:1425.3px;width:75.75px;height:30px;background:#f4f5f5;border:1px solid #e1e3e5;border-radius:7px;"></div>
<svg style="left:2443.3px;top:1411.4px;" width="25.2" height="25.2" viewBox="0 0 24 24" fill="none" stroke="#7b818c" stroke-width="1.8" stroke-linecap="round" stroke-linejoin="round"><path d="M10 12a2 2 0 1 0 4 0a2 2 0 0 0 -4 0"/><path d="M21 12c-2.400 4 -5.400 6 -9 6c-3.600 0 -6.600 -2 -9 -6c2.400 -4 5.400 -6 9 -6c3.600 0 6.600 2 9 6"/></svg>
<svg style="left:2481.4px;top:1410.8px;" width="26" height="26" viewBox="0 0 24 24" fill="none" stroke="#7b818c" stroke-width="1.75" stroke-linecap="round" stroke-linejoin="round"><path d="M4 17v2a2 2 0 0 0 2 2h12a2 2 0 0 0 2 -2v-2"/><path d="M7 11l5 5l5 -5"/><path d="M12 4v12"/></svg>
<svg style="left:1830.55px;top:1425.9px;" width="25.2" height="25.2" viewBox="0 0 24 24" fill="none" stroke="#7b818c" stroke-width="1.8" stroke-linecap="round" stroke-linejoin="round"><path d="M10 12a2 2 0 1 0 4 0a2 2 0 0 0 -4 0"/><path d="M21 12c-2.400 4 -5.400 6 -9 6c-3.600 0 -6.600 -2 -9 -6c2.400 -4 5.400 -6 9 -6c3.600 0 6.600 2 9 6"/></svg>
<svg style="left:1868.65px;top:1425.3px;" width="26" height="26" viewBox="0 0 24 24" fill="none" stroke="#7b818c" stroke-width="1.75" stroke-linecap="round" stroke-linejoin="round"><path d="M4 17v2a2 2 0 0 0 2 2h12a2 2 0 0 0 2 -2v-2"/><path d="M7 11l5 5l5 -5"/><path d="M12 4v12"/></svg>
</body></html>
